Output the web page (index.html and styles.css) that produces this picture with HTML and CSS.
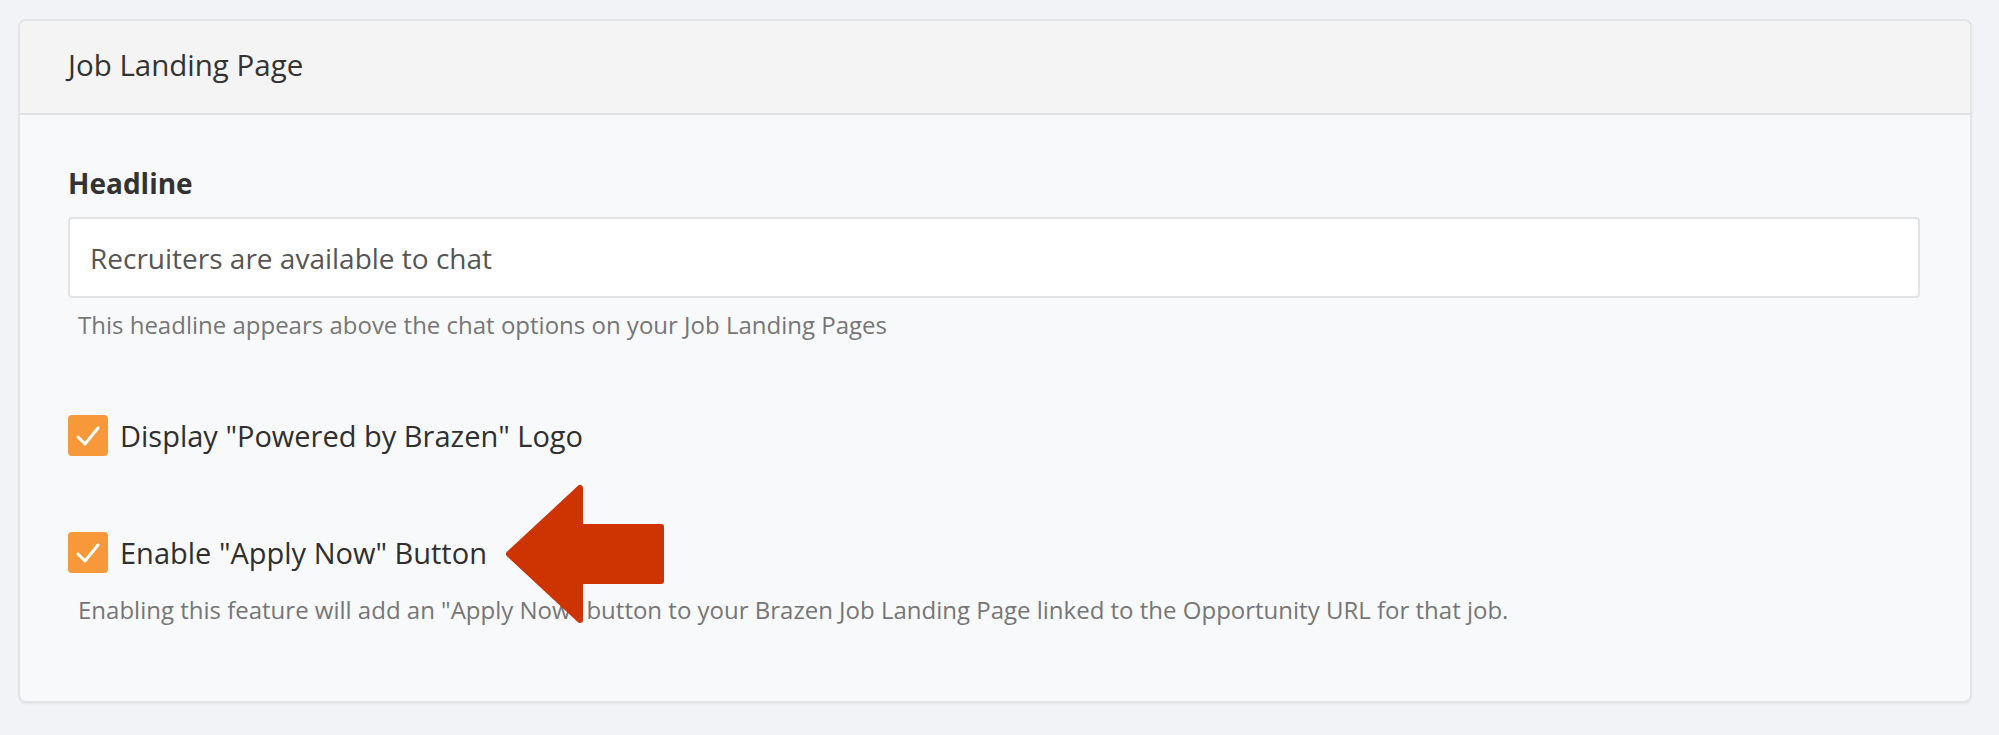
FILE: index.html
```html
<!DOCTYPE html>
<html lang="en">
<head>
	<meta charset="UTF-8">
	<title>Job Landing Page</title>
	<link rel="stylesheet" href="styles.css">
</head>
<body>
	<div class="panel">
		<!-- header -->
		<div class="panel-head">Job Landing Page</div>
		<div class="panel-body">
			<label class="field-label" for="headline">Headline</label>
			<input class="field-input" id="headline" type="text" value="Recruiters are available to chat">
			<p class="hint">This headline appears above the chat options on your Job Landing Pages</p>

			<div class="check-row first">
				<span class="check"><svg viewBox="0 0 40 40" width="40" height="40"><path d="M10 21 L17 28 L30 12" fill="none" stroke="#fff" stroke-width="3" stroke-linecap="round" stroke-linejoin="round"/></svg></span>
				<span class="check-text">Display "Powered by Brazen" Logo</span>
			</div>

			<div class="check-row second">
				<span class="check"><svg viewBox="0 0 40 40" width="40" height="40"><path d="M10 21 L17 28 L30 12" fill="none" stroke="#fff" stroke-width="3" stroke-linecap="round" stroke-linejoin="round"/></svg></span>
				<span class="check-text">Enable "Apply Now" Button</span>
				<!-- callout arrow -->
				<svg class="arrow" viewBox="0 0 160 140" width="160" height="140"><polygon points="4,69 75,3 75,42 156,42 156,96 75,96 75,135" fill="#cd3402" stroke="#cd3402" stroke-width="6" stroke-linejoin="round"/></svg>
			</div>
			<p class="hint hint-last">Enabling this feature will add an "Apply Now" button to your Brazen Job Landing Page linked to the Opportunity URL for that job.</p>
		</div>
	</div>
</body>
</html>
```

FILE: styles.css
```css
html, body {
	margin: 0;
	padding: 0;
	background: #f2f3f7;
	font-family: "Open Sans", "Noto Sans", sans-serif;
}
body {
	padding: 19px 27px 30px 18px;
}
.panel {
	background: #f8f9fb;
	border: 2px solid #e3e4e6;
	border-radius: 8px;
	box-shadow: 0 1px 2px rgba(0,0,0,.06);
	overflow: hidden;
}
.panel-head {
	height: 92px;
	line-height: 88px;
	background: #f4f4f4;
	border-bottom: 2px solid #e2e2e2;
	padding-left: 48px;
	font-size: 29.5px;
	color: #333;
}
.panel-body {
	padding: 50px 50px 76px 48px;
}
.field-label {
	display: block;
	font-size: 28px;
	line-height: 36px;
	font-weight: bold;
	color: #333;
}
.field-input {
	display: block;
	box-sizing: border-box;
	width: 100%;
	height: 81px;
	margin-top: 16px;
	padding: 0 20px;
	border: 2px solid #e2e3e5;
	border-radius: 4px;
	background: #fff;
	font-family: inherit;
	font-size: 28px;
	color: #555;
	outline: none;
}
.hint {
	margin: 12px 0 0 10px;
	font-size: 24px;
	line-height: 30px;
	color: #767676;
}
.check-row {
	position: relative;
	display: flex;
	align-items: center;
	gap: 12px;
	height: 41px;
}
.check-row.first {
	margin-top: 75px;
}
.check-row.second {
	margin-top: 76px;
}
.check {
	width: 40px;
	height: 41px;
	border-radius: 4px;
	background: #f7993a;
	display: flex;
	align-items: center;
	justify-content: center;
}
.check-text {
	font-size: 29px;
	color: #2f2f2f;
}
.arrow {
	position: absolute;
	left: 437px;
	top: -47px;
}
.hint-last {
	margin-top: 22px;
}
```
